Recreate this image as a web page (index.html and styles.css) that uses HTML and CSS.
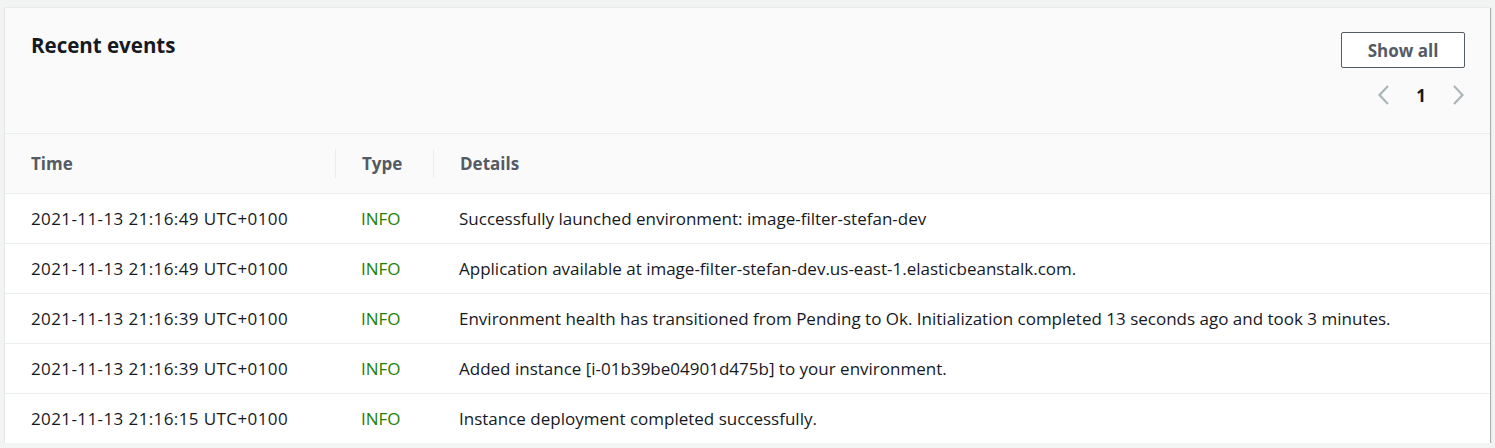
FILE: index.html
```html
<!DOCTYPE html>
<html>
<head>
<meta charset="utf-8">
<link rel="stylesheet" href="styles.css">
</head>
<body>
<div class="card">
  <div class="card-header">
    <h2 class="title">Recent events</h2>
    <div class="actions">
      <button class="btn">Show all</button>
      <div class="pager">
        <svg class="chev" width="13" height="22" viewBox="0 0 13 22"><path d="M11 2 L2.5 11 L11 20" fill="none" stroke="#aab7b8" stroke-width="2.2"/></svg>
        <span class="page">1</span>
        <svg class="chev" width="13" height="22" viewBox="0 0 13 22"><path d="M2 2 L10.5 11 L2 20" fill="none" stroke="#aab7b8" stroke-width="2.2"/></svg>
      </div>
    </div>
  </div>
  <table class="events">
    <thead>
      <tr>
        <th class="c-time"><span>Time</span></th>
        <th class="c-type"><span>Type</span></th>
        <th class="c-details"><span>Details</span></th>
      </tr>
    </thead>
    <tbody>
      <tr><td class="time">2021-11-13 21:16:49 UTC+0100</td><td class="info">INFO</td><td>Successfully launched environment: image-filter-stefan-dev</td></tr>
      <tr><td class="time">2021-11-13 21:16:49 UTC+0100</td><td class="info">INFO</td><td>Application available at image-filter-stefan-dev.us-east-1.elasticbeanstalk.com.</td></tr>
      <tr><td class="time">2021-11-13 21:16:39 UTC+0100</td><td class="info">INFO</td><td>Environment health has transitioned from Pending to Ok. Initialization completed 13 seconds ago and took 3 minutes.</td></tr>
      <tr><td class="time">2021-11-13 21:16:39 UTC+0100</td><td class="info">INFO</td><td>Added instance [i-01b39be04901d475b] to your environment.</td></tr>
      <tr><td class="time">2021-11-13 21:16:15 UTC+0100</td><td class="info">INFO</td><td>Instance deployment completed successfully.</td></tr>
    </tbody>
  </table>
</div>
</body>
</html>
```
FILE: styles.css
```css
html, body {
  margin: 0;
  padding: 0;
  background: #f2f3f3;
}
body {
  padding: 7px 0 0 4px;
  font-family: "Open Sans", "Noto Sans", Arial, sans-serif;
  color: #16191f;
  font-size: 17px;
}
.card {
  width: 1486px;
  box-sizing: border-box;
  background: #ffffff;
  border-left: 1px solid #e4e6e6;
  border-top: 1px solid #eaeded;
  box-shadow: 1px 1px 1px 0 rgba(0, 28, 36, 0.3);
}
.card-header {
  background: #fafafa;
  height: 126px;
  box-sizing: border-box;
  padding: 23px 25px 0 26px;
  display: flex;
  justify-content: space-between;
  align-items: flex-start;
  border-bottom: 1px solid #eaeded;
}
.title {
  margin: 0;
  font-size: 20.5px;
  line-height: 28px;
  font-weight: 700;
  color: #16191f;
}
.actions {
  display: flex;
  flex-direction: column;
  align-items: flex-end;
  margin-top: 1px;
}
.btn {
  width: 124px;
  height: 36px;
  box-sizing: border-box;
  border: 1px solid #545b64;
  border-radius: 2px;
  background: #ffffff;
  color: #545b64;
  font-family: inherit;
  font-size: 17px;
  font-weight: 700;
  padding: 0;
  cursor: pointer;
}
.pager {
  margin-top: 16px;
  display: flex;
  align-items: center;
  height: 22px;
}
.page {
  font-weight: 700;
  color: #16191f;
  width: 62px;
  text-align: center;
  font-size: 17px;
}
.events {
  width: 100%;
  border-collapse: collapse;
  table-layout: fixed;
}
.events th {
  background: #fafafa;
  height: 59px;
  padding: 0;
  text-align: left;
  font-weight: 700;
  color: #545b64;
  border-bottom: 1px solid #eaeded;
  vertical-align: middle;
}
.events th span {
  display: block;
  padding-left: 26px;
  line-height: 29px;
  border-left: 1px solid #eaeded;
}
.events th.c-time span {
  border-left: none;
}
.c-time { width: 330px; }
.c-type { width: 98px; }
.events td {
  height: 49px;
  padding: 0 0 0 26px;
  border-bottom: 1px solid #eaeded;
  vertical-align: middle;
  white-space: nowrap;
}
.events td.time {
  letter-spacing: 0.4px;
}
.events tbody tr:last-child td {
  border-bottom: none;
}
.events td.info {
  color: #1d8102;
}
```
